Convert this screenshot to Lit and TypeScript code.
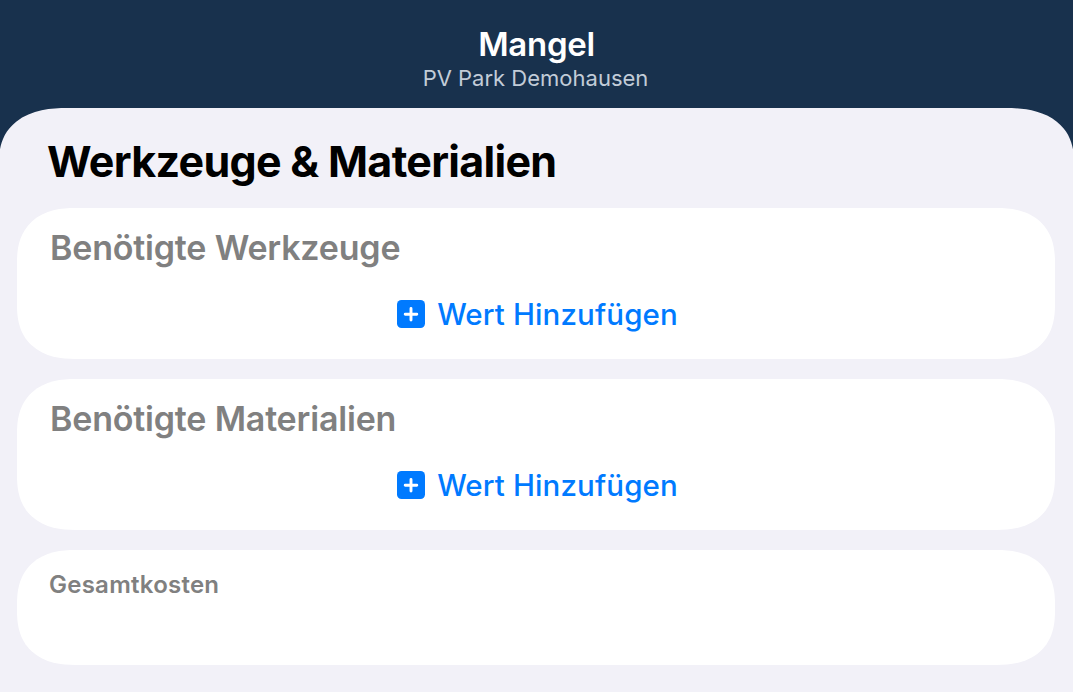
import { LitElement, html, css } from 'lit';
import { customElement, property } from 'lit/decorators.js';

@customElement('add-value-button')
export class AddValueButton extends LitElement {
  static styles = css`
    :host {
      display: block;
    }

    .button {
      display: flex;
      align-items: center;
      gap: 12px;
      padding: 0 0 0 3px;
      border: none;
      background: none;
      color: #007aff;
      font-family: Inter, 'Liberation Sans', sans-serif;
      font-size: 29.5px;
      font-weight: 540;
      line-height: 36px;
      letter-spacing: 0.12px;
      white-space: nowrap;
    }

    .icon {
      display: block;
      width: 28px;
      height: 28px;
    }
  `;

  render() {
    return html`
      <button class="button">
        <svg class="icon" viewBox="0 0 28 28">
          <rect width="28" height="28" rx="4.5" fill="#007aff" />
          <path d="M14 8.4v11.6M8.2 14.2h11.6" stroke="#fff" stroke-width="2.9" stroke-linecap="round" />
        </svg>
        <span>Wert Hinzufügen</span>
      </button>
    `;
  }
}

@customElement('value-card')
export class ValueCard extends LitElement {
  @property() label = '';

  static styles = css`
    :host {
      display: block;
      box-sizing: border-box;
      height: 151px;
      padding: 19px 33px 0;
      border-radius: 58px / 54px;
      corner-shape: superellipse(1.25);
      background: #fff;
    }

    .label {
      margin: 0 0 27px;
      color: #808080;
      font-size: 34px;
      font-weight: 640;
      line-height: 42px;
      letter-spacing: -0.19px;
    }

    .action {
      display: flex;
      justify-content: center;
    }
  `;

  render() {
    return html`
      <h2 class="label">${this.label}</h2>
      <div class="action"><add-value-button></add-value-button></div>
    `;
  }
}

@customElement('app-root')
export class AppRoot extends LitElement {
  static styles = css`
    :host {
      display: flex;
      flex-direction: column;
      height: 100vh;
      overflow: hidden;
      background: #18314d;
      font-family: Inter, 'Liberation Sans', sans-serif;
    }

    .header {
      box-sizing: border-box;
      flex: none;
      height: 108px;
      padding-top: 24px;
      text-align: center;
    }

    .title {
      color: #fff;
      font-size: 33px;
      font-weight: 600;
      line-height: 40px;
      letter-spacing: -0.3px;
    }

    .subtitle {
      padding-right: 2px;
      color: #c2ccd8;
      font-size: 22px;
      line-height: 28px;
    }

    .sheet {
      flex: 1;
      margin: 0 -1px;
      padding: 0 19px 0 18px;
      border-radius: 68px 68px 0 0 / 54px 54px 0 0;
      corner-shape: superellipse(1.25);
      background: #f2f1f8;
    }

    .heading {
      margin: 0;
      padding: 27px 30px 21px;
      color: #000;
      font-size: 43px;
      font-weight: 700;
      line-height: 52px;
      letter-spacing: -0.7px;
    }

    .cards {
      display: flex;
      flex-direction: column;
      gap: 20px;
    }

    .total {
      box-sizing: border-box;
      height: 115px;
      padding: 20px 32px;
      border-radius: 58px / 54px;
      corner-shape: superellipse(1.25);
      background: #fff;
      color: #808080;
      font-size: 24px;
      font-weight: 580;
      line-height: 30px;
      letter-spacing: 0.25px;
    }
  `;

  render() {
    return html`
      <header class="header">
        <div class="title">Mangel</div>
        <div class="subtitle">PV Park Demohausen</div>
      </header>
      <main class="sheet">
        <h1 class="heading">Werkzeuge &amp; Materialien</h1>
        <div class="cards">
          <value-card label="Benötigte Werkzeuge"></value-card>
          <value-card label="Benötigte Materialien"></value-card>
          <div class="total">Gesamtkosten</div>
        </div>
      </main>
    `;
  }
}

declare global {
  interface HTMLElementTagNameMap {
    'add-value-button': AddValueButton;
    'value-card': ValueCard;
    'app-root': AppRoot;
  }
}
